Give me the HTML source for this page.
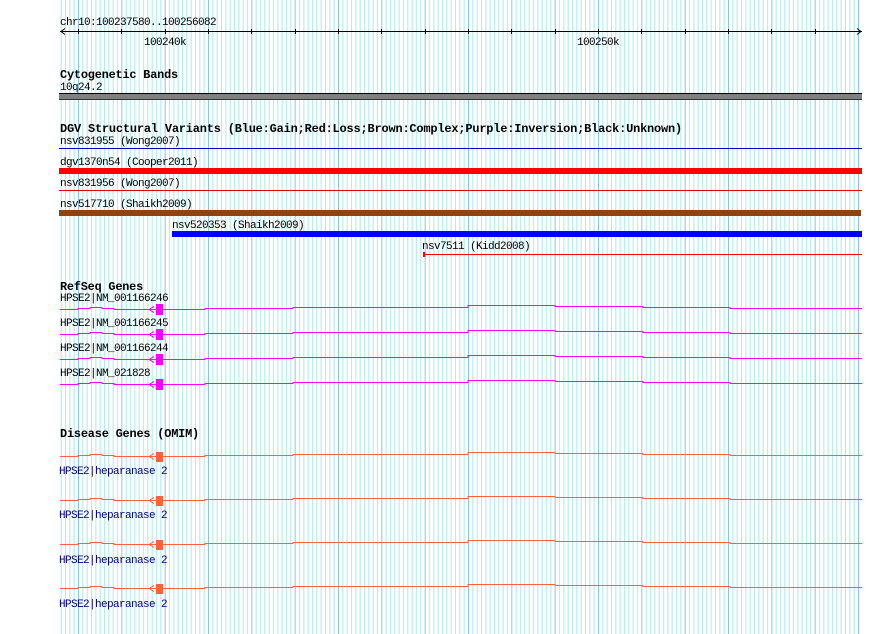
<!DOCTYPE html>
<html><head><meta charset="utf-8">
<style>
html,body{margin:0;padding:0;background:#fff;}
svg{display:block;}
text{font-family:"Liberation Mono","DejaVu Sans Mono",monospace;font-size:11px;letter-spacing:-0.6px;fill:#000;}
.h{font-weight:bold;font-size:12px;letter-spacing:-0.2px;}
.d{fill:#000080;}
.gl{fill:none;stroke-width:1;shape-rendering:crispEdges;}
</style></head>
<body>
<svg width="890" height="634" viewBox="0 0 890 634" xmlns="http://www.w3.org/2000/svg">
<defs>
<pattern id="g" patternUnits="userSpaceOnUse" x="78" y="0" width="43.333" height="10">
 <rect x="0" y="0" width="1" height="10" fill="#88c4ec"/>
 <rect x="4.333" y="0" width="1" height="10" fill="#a8ecec"/>
 <rect x="8.667" y="0" width="1" height="10" fill="#a8ecec"/>
 <rect x="13" y="0" width="1" height="10" fill="#a8ecec"/>
 <rect x="17.333" y="0" width="1" height="10" fill="#a8ecec"/>
 <rect x="21.667" y="0" width="1" height="10" fill="#a8ecec"/>
 <rect x="26" y="0" width="1" height="10" fill="#a8ecec"/>
 <rect x="30.333" y="0" width="1" height="10" fill="#a8ecec"/>
 <rect x="34.667" y="0" width="1" height="10" fill="#a8ecec"/>
 <rect x="39" y="0" width="1" height="10" fill="#a8ecec"/>
</pattern>
</defs>
<rect x="59" y="0" width="803" height="634" fill="url(#g)" shape-rendering="crispEdges"/>

<text x="60" y="25">chr10:100237580..100256082</text>
<line x1="60" y1="31.5" x2="862" y2="31.5" stroke="#000"/>
<polyline points="65,28.5 61,31.5 65,34.5" fill="none" stroke="#000"/>
<polyline points="857,28.5 861,31.5 857,34.5" fill="none" stroke="#000"/>
<g stroke="#000" shape-rendering="crispEdges">
<line x1="78.5" y1="29" x2="78.5" y2="34"/><line x1="121.5" y1="29" x2="121.5" y2="34"/>
<line x1="165.5" y1="29" x2="165.5" y2="34"/><line x1="208.5" y1="29" x2="208.5" y2="34"/>
<line x1="251.5" y1="29" x2="251.5" y2="34"/><line x1="295.5" y1="29" x2="295.5" y2="34"/>
<line x1="338.5" y1="29" x2="338.5" y2="34"/><line x1="381.5" y1="29" x2="381.5" y2="34"/>
<line x1="425.5" y1="29" x2="425.5" y2="34"/><line x1="468.5" y1="29" x2="468.5" y2="34"/>
<line x1="511.5" y1="29" x2="511.5" y2="34"/><line x1="555.5" y1="29" x2="555.5" y2="34"/>
<line x1="598.5" y1="29" x2="598.5" y2="34"/><line x1="641.5" y1="29" x2="641.5" y2="34"/>
<line x1="685.5" y1="29" x2="685.5" y2="34"/><line x1="728.5" y1="29" x2="728.5" y2="34"/>
<line x1="771.5" y1="29" x2="771.5" y2="34"/><line x1="815.5" y1="29" x2="815.5" y2="34"/>
</g>
<text x="144" y="45">100240k</text>
<text x="577" y="45">100250k</text>

<text class="h" x="60" y="78" textLength="118" lengthAdjust="spacingAndGlyphs">Cytogenetic Bands</text>
<text x="60" y="90">10q24.2</text>
<rect x="59" y="93" width="803" height="7" fill="#808080"/>
<rect x="59" y="93" width="803" height="1" fill="#000"/>
<rect x="59" y="99" width="803" height="1" fill="#333"/>

<text class="h" x="60" y="132" textLength="622" lengthAdjust="spacingAndGlyphs">DGV Structural Variants (Blue:Gain;Red:Loss;Brown:Complex;Purple:Inversion;Black:Unknown)</text>
<text x="60" y="144">nsv831955 (Wong2007)</text>
<rect x="59" y="148" width="803" height="1" fill="#0000c0"/>
<text x="60" y="165">dgv1370n54 (Cooper2011)</text>
<rect x="59" y="168" width="803" height="6" fill="#ff0000"/>
<text x="60" y="186">nsv831956 (Wong2007)</text>
<rect x="59" y="190" width="803" height="1" fill="#e00000"/>
<text x="60" y="207">nsv517710 (Shaikh2009)</text>
<rect x="59" y="210" width="802" height="6" fill="#8b4513"/>
<text x="172" y="228">nsv520353 (Shaikh2009)</text>
<rect x="172" y="231" width="690" height="6" fill="#0000ff"/>
<text x="422" y="249">nsv7511 (Kidd2008)</text>
<rect x="423" y="254" width="439" height="1" fill="#ff0000"/>
<rect x="423" y="252" width="2" height="5" fill="#ff0000"/>

<text class="h" x="60" y="290" textLength="83" lengthAdjust="spacingAndGlyphs">RefSeq Genes</text>

<text x="60" y="301">HPSE2|NM_001166246</text>
<g class="gl" stroke="#ff00ff">
<polyline points="60,309.5 78,309.5 78,308.5 90,308.5 90,307.5 102,307.5 102,308.5 114,308.5 114,309.5 157,309.5"/>
<polyline points="154,306.5 149,309.5 154,312.5"/>
<polyline points="162,309.5 205,309.5 205,308.5 293,308.5 293,307.5 468,307.5 468,305.5 555,305.5 555,306.5 643,306.5 643,307.5 730,307.5 730,308.5 862,308.5"/>
</g>
<rect x="156" y="304" width="7" height="11" fill="#ff00ff"/>

<text x="60" y="326">HPSE2|NM_001166245</text>
<g class="gl" stroke="#ff00ff">
<polyline points="60,334.5 78,334.5 78,333.5 90,333.5 90,332.5 102,332.5 102,333.5 114,333.5 114,334.5 157,334.5"/>
<polyline points="154,331.5 149,334.5 154,337.5"/>
<polyline points="162,334.5 205,334.5 205,333.5 293,333.5 293,332.5 468,332.5 468,330.5 555,330.5 555,331.5 643,331.5 643,332.5 730,332.5 730,333.5 862,333.5"/>
</g>
<rect x="156" y="329" width="7" height="11" fill="#ff00ff"/>

<text x="60" y="351">HPSE2|NM_001166244</text>
<g class="gl" stroke="#ff00ff">
<polyline points="60,359.5 78,359.5 78,358.5 90,358.5 90,357.5 102,357.5 102,358.5 114,358.5 114,359.5 157,359.5"/>
<polyline points="154,356.5 149,359.5 154,362.5"/>
<polyline points="162,359.5 205,359.5 205,358.5 293,358.5 293,357.5 468,357.5 468,355.5 555,355.5 555,356.5 643,356.5 643,357.5 730,357.5 730,358.5 862,358.5"/>
</g>
<rect x="156" y="354" width="7" height="11" fill="#ff00ff"/>

<text x="60" y="376">HPSE2|NM_021828</text>
<g class="gl" stroke="#ff00ff">
<polyline points="60,384.5 78,384.5 78,383.5 90,383.5 90,382.5 102,382.5 102,383.5 114,383.5 114,384.5 157,384.5"/>
<polyline points="154,381.5 149,384.5 154,387.5"/>
<polyline points="162,384.5 205,384.5 205,383.5 293,383.5 293,382.5 468,382.5 468,380.5 555,380.5 555,381.5 643,381.5 643,382.5 730,382.5 730,383.5 862,383.5"/>
</g>
<rect x="156" y="379" width="7" height="11" fill="#ff00ff"/>

<text class="h" x="60" y="437" textLength="139" lengthAdjust="spacingAndGlyphs">Disease Genes (OMIM)</text>

<g class="gl" stroke="#ff6040">
<polyline points="60,456.5 78,456.5 78,455.5 90,455.5 90,454.5 102,454.5 102,455.5 114,455.5 114,456.5 157,456.5"/>
<polyline points="154,453.5 149,456.5 154,459.5"/>
<polyline points="162,456.5 205,456.5 205,455.5 293,455.5 293,454.5 468,454.5 468,452.5 555,452.5 555,453.5 643,453.5 643,454.5 730,454.5 730,455.5 862,455.5"/>
</g>
<rect x="156" y="452" width="7" height="10" fill="#ff6040"/>
<text class="d" x="59" y="474">HPSE2|heparanase 2</text>

<g class="gl" stroke="#ff6040">
<polyline points="60,500.5 78,500.5 78,499.5 90,499.5 90,498.5 102,498.5 102,499.5 114,499.5 114,500.5 157,500.5"/>
<polyline points="154,497.5 149,500.5 154,503.5"/>
<polyline points="162,500.5 205,500.5 205,499.5 293,499.5 293,498.5 468,498.5 468,496.5 555,496.5 555,497.5 643,497.5 643,498.5 730,498.5 730,499.5 862,499.5"/>
</g>
<rect x="156" y="496" width="7" height="10" fill="#ff6040"/>
<text class="d" x="59" y="518">HPSE2|heparanase 2</text>

<g class="gl" stroke="#ff6040">
<polyline points="60,544.5 78,544.5 78,543.5 90,543.5 90,542.5 102,542.5 102,543.5 114,543.5 114,544.5 157,544.5"/>
<polyline points="154,541.5 149,544.5 154,547.5"/>
<polyline points="162,544.5 205,544.5 205,543.5 293,543.5 293,542.5 468,542.5 468,540.5 555,540.5 555,541.5 643,541.5 643,542.5 730,542.5 730,543.5 862,543.5"/>
</g>
<rect x="156" y="540" width="7" height="10" fill="#ff6040"/>
<text class="d" x="59" y="563">HPSE2|heparanase 2</text>

<g class="gl" stroke="#ff6040">
<polyline points="60,588.5 78,588.5 78,587.5 90,587.5 90,586.5 102,586.5 102,587.5 114,587.5 114,588.5 157,588.5"/>
<polyline points="154,585.5 149,588.5 154,591.5"/>
<polyline points="162,588.5 205,588.5 205,587.5 293,587.5 293,586.5 468,586.5 468,584.5 555,584.5 555,585.5 643,585.5 643,586.5 730,586.5 730,587.5 862,587.5"/>
</g>
<rect x="156" y="584" width="7" height="10" fill="#ff6040"/>
<text class="d" x="59" y="607">HPSE2|heparanase 2</text>
</svg>
</body></html>
